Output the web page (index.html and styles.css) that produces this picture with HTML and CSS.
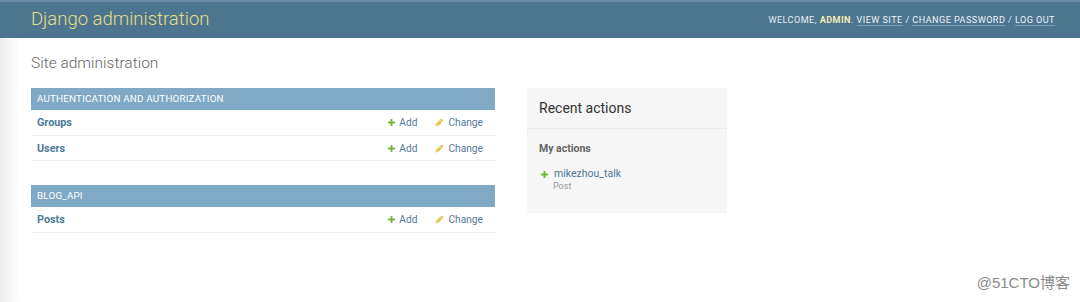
FILE: index.html
```html
<!DOCTYPE html>
<html>
  <head>
    <title>Site administration | Django site admin</title>
    <meta charset="utf-8" />
    <link rel="stylesheet" href="styles.css">
  </head>
  <body>
    <div class="header">
      <div class="branding">Django administration</div>
      <div class="user_tools">
        Welcome, <strong>admin</strong>.
        <a href="#">View site</a> /
        <a href="#">Change password</a> /
        <a href="#">Log out</a>
      </div>
    </div>
    <div class="content">
      <h1 class="page_title">Site administration</h1>
      <div class="colmask">
        <div class="content_main">
          <div class="module">
            <div class="caption">Authentication and Authorization</div>
            <div class="model_row">
              <a class="model_name" href="#">Groups</a>
              <a class="addlink" href="#">
                <svg viewBox="0 0 1792 1792"><path d="M1600 796v192q0 40-28 68t-68 28h-416v416q0 40-28 68t-68 28h-192q-40 0-68-28t-28-68v-416h-416q-40 0-68-28t-28-68v-192q0-40 28-68t68-28h416v-416q0-40 28-68t68-28h192q40 0 68 28t28 68v416h416q40 0 68 28t28 68z"/></svg>Add</a>
              <a class="changelink" href="#">
                <svg viewBox="0 0 1792 1792"><path d="M491 1536l91-91-235-235-91 91v107h128v128h107zm523-928q0-22-22-22-10 0-17 7l-542 542q-7 7-7 17 0 22 22 22 10 0 17-7l542-542q7-7 7-17zm-54-192l416 416-832 832h-416v-416zm683 96q0 53-37 91l-166 165-416-416 165-166q36-38 91-38 53 0 91 38l235 234q37 39 37 91z"/></svg>Change</a>
            </div>
            <div class="model_row">
              <a class="model_name" href="#">Users</a>
              <a class="addlink" href="#">
                <svg viewBox="0 0 1792 1792"><path d="M1600 796v192q0 40-28 68t-68 28h-416v416q0 40-28 68t-68 28h-192q-40 0-68-28t-28-68v-416h-416q-40 0-68-28t-28-68v-192q0-40 28-68t68-28h416v-416q0-40 28-68t68-28h192q40 0 68 28t28 68v416h416q40 0 68 28t28 68z"/></svg>Add</a>
              <a class="changelink" href="#">
                <svg viewBox="0 0 1792 1792"><path d="M491 1536l91-91-235-235-91 91v107h128v128h107zm523-928q0-22-22-22-10 0-17 7l-542 542q-7 7-7 17 0 22 22 22 10 0 17-7l542-542q7-7 7-17zm-54-192l416 416-832 832h-416v-416zm683 96q0 53-37 91l-166 165-416-416 165-166q36-38 91-38 53 0 91 38l235 234q37 39 37 91z"/></svg>Change</a>
            </div>
          </div>
          <div class="module">
            <div class="caption">Blog_Api</div>
            <div class="model_row">
              <a class="model_name" href="#">Posts</a>
              <a class="addlink" href="#">
                <svg viewBox="0 0 1792 1792"><path d="M1600 796v192q0 40-28 68t-68 28h-416v416q0 40-28 68t-68 28h-192q-40 0-68-28t-28-68v-416h-416q-40 0-68-28t-28-68v-192q0-40 28-68t68-28h416v-416q0-40 28-68t68-28h192q40 0 68 28t28 68v416h416q40 0 68 28t28 68z"/></svg>Add</a>
              <a class="changelink" href="#">
                <svg viewBox="0 0 1792 1792"><path d="M491 1536l91-91-235-235-91 91v107h128v128h107zm523-928q0-22-22-22-10 0-17 7l-542 542q-7 7-7 17 0 22 22 22 10 0 17-7l542-542q7-7 7-17zm-54-192l416 416-832 832h-416v-416zm683 96q0 53-37 91l-166 165-416-416 165-166q36-38 91-38 53 0 91 38l235 234q37 39 37 91z"/></svg>Change</a>
            </div>
          </div>
        </div>
        <div class="content_related">
          <div class="recent_actions">
            <h2>Recent actions</h2>
            <h3>My actions</h3>
            <ul class="actionlist">
              <li>
                <div class="action_line">
                  <svg viewBox="0 0 1792 1792"><path d="M1600 796v192q0 40-28 68t-68 28h-416v416q0 40-28 68t-68 28h-192q-40 0-68-28t-28-68v-416h-416q-40 0-68-28t-28-68v-192q0-40 28-68t68-28h416v-416q0-40 28-68t68-28h192q40 0 68 28t28 68v416h416q40 0 68 28t28 68z"/></svg>
                  <a href="#">mikezhou_talk</a>
                </div>
                <span class="mini">Post</span>
              </li>
            </ul>
          </div>
        </div>
      </div>
    </div>
    <div class="watermark">@51CTO博客</div>
  </body>
</html>
```

FILE: styles.css
```css
html,
body {
  height: 100%;
}
body {
  margin: 0;
  padding: 0;
  font-family: Roboto, "Liberation Sans", sans-serif;
  color: #333;
  background: linear-gradient(to right, #ececec 0, #f7f7f7 10px, #fff 20px);
  display: flex;
  flex-direction: column;
  overflow: hidden;
}
a {
  text-decoration: none;
  color: #4a7a98;
}

/* Header bar */
.header {
  height: 38px;
  background-color: #4d7590;
  border-top: 2px solid #6b8ea6;
  box-sizing: border-box;
  display: flex;
  align-items: center;
  justify-content: space-between;
  padding: 0 25px 0 31px;
}
.branding {
  font-size: 18.5px;
  font-weight: 300;
  color: #e6df82;
  padding-bottom: 2px;
}
.user_tools {
  font-size: 9.1px;
  letter-spacing: 0.45px;
  text-transform: uppercase;
  color: #e7eef2;
}
.user_tools strong {
  font-weight: bold;
  color: #f3efb6;
}
.user_tools a {
  color: #eef3f6;
  border-bottom: 1px solid #7f9db1;
}

/* Main content */
.content {
  padding: 16px 31px 0;
  flex: 1;
}
.page_title {
  margin: 0 0 16px;
  font-size: 15.5px;
  line-height: 18px;
  font-weight: 300;
  color: #666;
}
.colmask {
  display: flex;
  gap: 32px;
  align-items: flex-start;
}
.content_main {
  width: 464px;
}
.module {
  margin-bottom: 24px;
}
.caption {
  height: 22px;
  line-height: 22px;
  padding: 0 6px;
  background-color: #80a9c5;
  color: #fff;
  font-size: 9.8px;
  letter-spacing: 0.2px;
  text-transform: uppercase;
}
.model_row {
  height: 25.5px;
  border-bottom: 1px solid #ececec;
  box-sizing: border-box;
  display: flex;
  align-items: center;
  padding: 1px 12px 0 6px;
  font-size: 10.8px;
}
.model_name {
  font-weight: bold;
  flex: 1;
}
.addlink,
.changelink {
  display: flex;
  align-items: center;
  color: #53799a;
  font-size: 10.2px;
}
.addlink svg,
.changelink svg {
  width: 9px;
  height: 9px;
  margin-right: 3px;
}
.addlink svg {
  fill: #70b83a;
}
.changelink {
  margin-left: 18px;
}
.changelink svg {
  fill: #e8be3b;
  margin-right: 4px;
}

/* Sidebar */
.content_related {
  width: 200px;
}
.recent_actions {
  background-color: #f6f6f6;
  height: 125px;
}
.recent_actions h2 {
  margin: 0;
  padding: 12px;
  font-size: 14px;
  line-height: 16px;
  font-weight: normal;
  color: #333;
  border-bottom: 1px solid #ebebeb;
}
.recent_actions h3 {
  margin: 0;
  padding: 13px 12px 0;
  font-size: 10.5px;
  line-height: 14px;
  font-weight: bold;
  color: #666;
}
.actionlist {
  list-style: none;
  margin: 12px 0 0;
  padding: 0 12px;
}
.action_line {
  display: flex;
  align-items: center;
  font-size: 10.5px;
  line-height: 12px;
}
.action_line svg {
  width: 9px;
  height: 9px;
  fill: #70b83a;
  margin: 0 5px 0 1px;
}
.mini {
  display: block;
  font-size: 9px;
  line-height: 12px;
  color: #999;
  margin-left: 14px;
}

/* Watermark */
.watermark {
  position: absolute;
  right: 10px;
  bottom: 10px;
  font-family: "Liberation Sans", "Noto Sans CJK SC", sans-serif;
  font-size: 15px;
  color: #8a8a8a;
}
```
